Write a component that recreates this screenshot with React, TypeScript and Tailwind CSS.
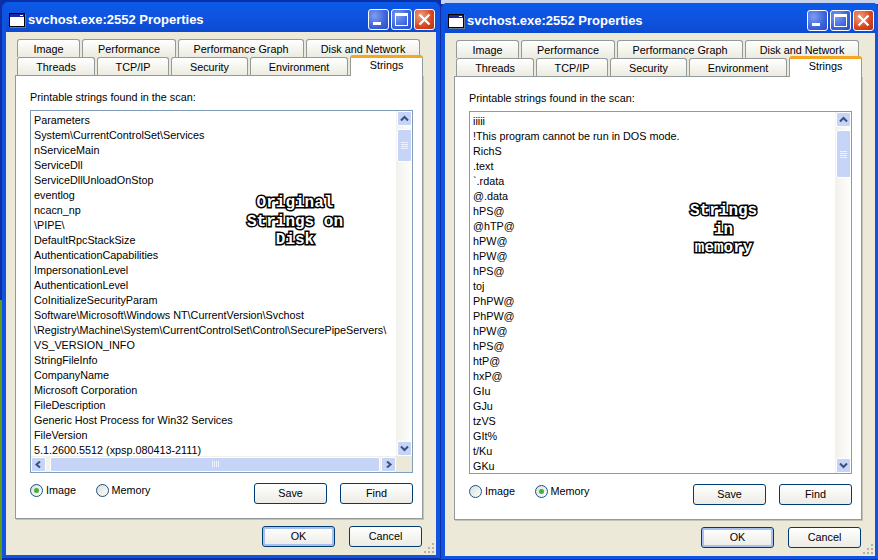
const leftStrings = [
  "Parameters",
  "System\\CurrentControlSet\\Services",
  "nServiceMain",
  "ServiceDll",
  "ServiceDllUnloadOnStop",
  "eventlog",
  "ncacn_np",
  "\\PIPE\\",
  "DefaultRpcStackSize",
  "AuthenticationCapabilities",
  "ImpersonationLevel",
  "AuthenticationLevel",
  "CoInitializeSecurityParam",
  "Software\\Microsoft\\Windows NT\\CurrentVersion\\Svchost",
  "\\Registry\\Machine\\System\\CurrentControlSet\\Control\\SecurePipeServers\\",
  "VS_VERSION_INFO",
  "StringFileInfo",
  "CompanyName",
  "Microsoft Corporation",
  "FileDescription",
  "Generic Host Process for Win32 Services",
  "FileVersion",
  "5.1.2600.5512 (xpsp.080413-2111)",
]

const rightStrings = [
  "iiiii",
  "!This program cannot be run in DOS mode.",
  "RichS",
  ".text",
  "`.rdata",
  "@.data",
  "hPS@",
  "@hTP@",
  "hPW@",
  "hPW@",
  "hPS@",
  "toj",
  "PhPW@",
  "PhPW@",
  "hPW@",
  "hPS@",
  "htP@",
  "hxP@",
  "GIu",
  "GJu",
  "tzVS",
  "GIt%",
  "t/Ku",
  "GKu",
]

const TitleButton = ({ kind }: { kind: "min" | "max" | "close" }) => (
  <div
    className={`w-[21px] h-[21px] rounded-[3px] border border-white flex items-center justify-center ${
      kind === "close"
        ? "bg-[radial-gradient(circle_at_30%_30%,#f0a080,#d8441c_60%,#b83210)]"
        : "bg-[radial-gradient(circle_at_30%_30%,#7f9df0,#3a62dc_60%,#2a4cc4)]"
    }`}
  >
    {kind === "min" && <div className="w-[8px] h-[3px] bg-white mt-[8px] mr-[3px]" />}
    {kind === "max" && <div className="w-[13px] h-[13px] border border-white border-t-[3px]" />}
    {kind === "close" && (
      <svg width="13" height="13" viewBox="0 0 13 13">
        <path d="M1.5 1.5 L11.5 11.5 M11.5 1.5 L1.5 11.5" stroke="white" strokeWidth="2.2" fill="none" />
      </svg>
    )}
  </div>
)

const AppIcon = () => (
  <div className="w-[16px] h-[14px] border border-black bg-white shadow-[1px_1px_0_#6b7a99]">
    <div className="h-[3px] bg-[#1a2a9c] flex justify-end items-center pr-[1px]">
      <div className="w-[3px] h-[1px] bg-white" />
    </div>
  </div>
)

const Tab = ({ label, w, active }: { label: string; w: string; active?: boolean }) =>
  active ? (
    <div className={`${w} h-[21px] -mb-[1px] -mt-[2px] relative z-10 bg-white border-x border-[#919b9c] border-t-[3px] border-t-[#f5a623] rounded-t-[3px] text-center leading-[15px]`}>
      {label}
    </div>
  ) : (
    <div className={`${w} h-[18px] bg-gradient-to-b from-white to-[#ecebe0] border-x border-t border-[#919b9c] rounded-t-[3px] text-center leading-[18px]`}>
      {label}
    </div>
  )

const Arrow = ({ d }: { d: string }) => (
  <div className="w-[15px] h-[15px] shrink-0 rounded-[2px] border border-white bg-[#c5d4f7] flex items-center justify-center">
    <svg width="9" height="7" viewBox="0 0 9 7">
      <path d={d} stroke="#3a4f80" strokeWidth="2" fill="none" />
    </svg>
  </div>
)

const VScroll = ({ thumb }: { thumb: string }) => (
  <div className="w-[16px] h-full flex flex-col bg-gradient-to-r from-[#f3f1ec] to-[#fefefb] items-center">
    <Arrow d="M1 5.5 L4.5 2 L8 5.5" />
    <div className={`${thumb} w-[15px] mt-[3px] rounded-[2px] border border-white bg-[#c5d4f7] flex flex-col items-center justify-center gap-[1px]`}>
      <div className="w-[7px] h-[1px] bg-[#eef3ff]" />
      <div className="w-[7px] h-[1px] bg-[#eef3ff]" />
      <div className="w-[7px] h-[1px] bg-[#eef3ff]" />
      <div className="w-[7px] h-[1px] bg-[#eef3ff]" />
    </div>
    <div className="flex-1" />
    <Arrow d="M1 1.5 L4.5 5 L8 1.5" />
  </div>
)

const HScroll = () => (
  <div className="h-[16px] flex items-center bg-[#f3f1ec]">
    <Arrow d="M6 0.5 L2.5 3.5 L6 6.5" />
    <div className="flex-1 h-[15px] ml-[4px] mr-[1px] rounded-[2px] border border-white bg-[#c5d4f7] flex items-center justify-center gap-[1px]">
      <div className="w-[1px] h-[6px] bg-[#eef3ff]" />
      <div className="w-[1px] h-[6px] bg-[#eef3ff]" />
      <div className="w-[1px] h-[6px] bg-[#eef3ff]" />
      <div className="w-[1px] h-[6px] bg-[#eef3ff]" />
    </div>
    <Arrow d="M3 0.5 L6.5 3.5 L3 6.5" />
  </div>
)

const Radio = ({ label, on, w }: { label: string; on?: boolean; w: string }) => (
  <div className={`${w} flex items-center gap-[3px]`}>
    <div className="w-[13px] h-[13px] rounded-full border border-[#1c5180] bg-gradient-to-br from-[#dcdcd7] to-white flex items-center justify-center">
      {on && <div className="w-[5px] h-[5px] rounded-full bg-[#3fb23f]" />}
    </div>
    <span>{label}</span>
  </div>
)

const XpButton = ({ label, dflt }: { label: string; dflt?: boolean }) => (
  <div
    className={`w-[73px] h-[21px] rounded-[3px] border border-[#003c74] bg-gradient-to-b from-white to-[#ecebe5] text-center leading-[19px] ${
      dflt ? "shadow-[inset_0_0_0_2px_#a9c0ee]" : ""
    }`}
  >
    {label}
  </div>
)

const Grip = () => (
  <svg className="absolute right-[1px] bottom-[1px]" width="11" height="11" viewBox="0 0 11 11" fill="#b5b2a2">
    <rect x="8" y="0" width="2" height="2" />
    <rect x="4" y="4" width="2" height="2" />
    <rect x="8" y="4" width="2" height="2" />
    <rect x="0" y="8" width="2" height="2" />
    <rect x="4" y="8" width="2" height="2" />
    <rect x="8" y="8" width="2" height="2" />
  </svg>
)

const PropsWindow = ({
  strings,
  memory,
  note,
  pos,
}: {
  strings: string[]
  memory?: boolean
  note: React.ReactNode
  pos: string
}) => (
  <div className={`absolute ${pos} w-[438px] h-[556px] rounded-t-[6px] bg-[#0f53e0] px-[4px] pb-[3px] flex flex-col text-[10.8px] text-black font-['Liberation_Sans',sans-serif]`}>
    {/* Title bar */}
    <div className="h-[30px] shrink-0 flex items-center pt-[5px] pl-[3px] pr-[1px] gap-[3px] bg-gradient-to-b from-[#0a5ae8] via-[#0f53e0] to-[#0c4bd0]">
      <AppIcon />
      <span className="flex-1 text-white font-bold text-[13px]">
        svchost.exe:2552 Properties
      </span>
      <div className="flex gap-[2px]">
        <TitleButton kind="min" />
        <TitleButton kind="max" />
        <TitleButton kind="close" />
      </div>
    </div>

    {/* Dialog body */}
    <div className="relative flex-1 bg-[#ece9d8] pt-[7px] px-[9px] flex flex-col">
      <div className="flex gap-[2px] pl-[2px]">
        <Tab label="Image" w="w-[63px]" />
        <Tab label="Performance" w="w-[94px]" />
        <Tab label="Performance Graph" w="w-[126px]" />
        <Tab label="Disk and Network" w="w-[114px]" />
      </div>
      <div className="flex gap-[2px] pl-[2px]">
        <Tab label="Threads" w="w-[78px]" />
        <Tab label="TCP/IP" w="w-[72px]" />
        <Tab label="Security" w="w-[77px]" />
        <Tab label="Environment" w="w-[98px]" />
        <Tab label="Strings" w="w-[73px]" active />
      </div>

      {/* Panel */}
      <div className="w-[408px] h-[444px] bg-white border border-[#919b9c] shadow-[1px_1px_0_#c4c2b4] px-[14px] flex flex-col">
        <div className="h-[34px] shrink-0 pt-[13px] leading-[16px]">Printable strings found in the scan:</div>
        <div className="relative w-[383px] h-[363px] shrink-0 border border-[#7f9db9] flex">
          <div className="flex-1 min-w-0 flex flex-col">
            <div className="flex-1 min-h-0 overflow-hidden pl-[3px] pt-[2px] leading-[15px] whitespace-nowrap">
              {strings.map((s, i) => (
                <div key={i} className="h-[15px]">{s}</div>
              ))}
            </div>
            {!memory && <HScroll />}
          </div>
          <div className="w-[16px] shrink-0 flex flex-col">
            <div className="flex-1 min-h-0">
              <VScroll thumb={memory ? "h-[48px]" : "h-[33px]"} />
            </div>
            {!memory && <div className="h-[16px] bg-[#ece9d8]" />}
          </div>
          {note}
        </div>
        <div className="flex items-start mt-[9px]">
          <Radio label="Image" w="w-[67px]" on={!memory} />
          <Radio label="Memory" w="w-[157px]" on={memory} />
          <div className="flex gap-[13px] ml-[5px] -mr-[5px] mt-[1px] shrink-0">
            <XpButton label="Save" />
            <XpButton label="Find" />
          </div>
        </div>
      </div>

      <div className="flex justify-end gap-[14px] mt-[7px] mr-[5px]">
        <XpButton label="OK" dflt />
        <XpButton label="Cancel" />
      </div>
      <Grip />
    </div>
  </div>
)

const Note = ({ lines, pos }: { lines: string[]; pos: string }) => (
  <div className={`absolute ${pos} text-center font-bold text-[16px] leading-[18.5px] text-white font-['Liberation_Mono',monospace] [-webkit-text-stroke:3px_black] [paint-order:stroke_fill]`}>
    {lines.map(l => <div key={l}>{l}</div>)}
  </div>
)

export default function App() {
  return (
    <div className="relative w-[878px] h-[560px] overflow-hidden bg-[#0c2fa8]">
      <div className="absolute left-[441px] top-0 w-[437px] h-[4px] bg-[#c8d4ef]" />
      <div className="absolute left-0 top-[300px] w-[2px] h-[260px] bg-[#5f9a20]" />
      <PropsWindow
        pos="left-[2px] top-[2px]"
        strings={leftStrings}
        note={<Note lines={["Original", "Strings on", "Disk"]} pos="left-[216px] top-[83px]" />}
      />
      <PropsWindow
        pos="left-[441px] top-[3px]"
        strings={rightStrings}
        memory
        note={<Note lines={["Strings", "in", "memory"]} pos="left-[220px] top-[90px]" />}
      />
    </div>
  )
}
